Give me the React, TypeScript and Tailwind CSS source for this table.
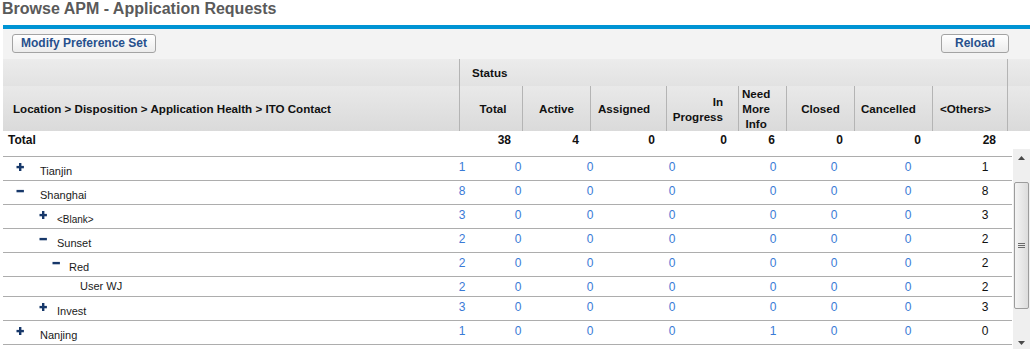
import React from "react";

type Row = {
  label: string;
  level: 0 | 1 | 2 | 3;
  icon?: "plus" | "minus";
  vals: number[];
  small?: boolean;
  short?: boolean;
};

const headerCols = [
  { key: "total", w: "w-[63px]", total: "38" },
  { key: "active", w: "w-[68px]", total: "4" },
  { key: "assigned", w: "w-[76px]", total: "0" },
  { key: "inprogress", w: "w-[72px]", total: "0" },
  { key: "needinfo", w: "w-[48px]", total: "6" },
  { key: "closed", w: "w-[68px]", total: "0" },
  { key: "cancelled", w: "w-[78px]", total: "0" },
  { key: "others", w: "w-[75px]", total: "28" },
];

const rows: Row[] = [
  { label: "Tianjin", level: 0, icon: "plus", vals: [1, 0, 0, 0, 0, 0, 0, 1] },
  { label: "Shanghai", level: 0, icon: "minus", vals: [8, 0, 0, 0, 0, 0, 0, 8] },
  { label: "<Blank>", level: 1, icon: "plus", vals: [3, 0, 0, 0, 0, 0, 0, 3], small: true },
  { label: "Sunset", level: 1, icon: "minus", vals: [2, 0, 0, 0, 0, 0, 0, 2] },
  { label: "Red", level: 2, icon: "minus", vals: [2, 0, 0, 0, 0, 0, 0, 2] },
  { label: "User WJ", level: 3, vals: [2, 0, 0, 0, 0, 0, 0, 2], short: true },
  { label: "Invest", level: 1, icon: "plus", vals: [3, 0, 0, 0, 0, 0, 0, 3] },
  { label: "Nanjing", level: 0, icon: "plus", vals: [1, 0, 0, 0, 1, 0, 0, 0] },
];

// left offset of each value cell (40px wide, centred on the digit)
const valueGaps = ["ml-0", "ml-[16px]", "ml-[32px]", "ml-[42px]", "ml-[61px]", "ml-[21px]", "ml-[34px]", "ml-[37px]"];

const levelStyles = {
  0: { icon: "ml-[13px]", label: "ml-[16px]" },
  1: { icon: "ml-[36px]", label: "ml-[10px]" },
  2: { icon: "ml-[49px]", label: "ml-[9px]" },
  3: { icon: "", label: "ml-[77px]" },
};

function TreeIcon({ kind }: { kind: "plus" | "minus" }) {
  return (
    <svg width="8" height="8" viewBox="0 0 8 8" className="block shrink-0">
      {kind === "plus" && <rect x="3" y="0" width="2.4" height="8" fill="#17386a" />}
      <rect x="0.5" y="2.9" width="7.4" height="2.4" fill="#17386a" />
    </svg>
  );
}

function Scrollbar() {
  return (
    <div className="w-[17px] h-[200px] bg-[#efefef] flex flex-col items-center">
      <div className="h-[18px] flex items-center justify-center">
        <svg width="7" height="4" viewBox="0 0 7 4">
          <path d="M0 4 L3.5 0 L7 4 Z" fill="#4a4a4a" />
        </svg>
      </div>
      <div className="mt-[15px] w-[15px] h-[127px] rounded-[2px] border border-[#9c9c9c] bg-gradient-to-r from-[#f4f4f4] to-[#dcdcdc] flex flex-col items-center justify-center gap-[1px]">
        <div className="w-[7px] h-px bg-[#6a6a6a]" />
        <div className="w-[7px] h-px bg-[#6a6a6a]" />
        <div className="w-[7px] h-px bg-[#6a6a6a]" />
      </div>
      <div className="mt-[32px] h-[4px] flex items-center justify-center">
        <svg width="7" height="4" viewBox="0 0 7 4">
          <path d="M0 0 L7 0 L3.5 4 Z" fill="#4a4a4a" />
        </svg>
      </div>
    </div>
  );
}

export default function App() {
  return (
    <div className="w-[1034px] h-[349px] overflow-hidden bg-white font-['Liberation_Sans',Arial,sans-serif] text-[#111]">
      <h1 className="h-[25px] pl-[2px] text-[16px] leading-[17px] font-bold text-[#5a5a5a]">
        Browse APM - Application Requests
      </h1>

      <div className="ml-[3px] w-[1027px]">
        <div className="h-[4px] bg-[#0094d4]" />

        {/* toolbar */}
        <div className="h-[30px] bg-[#f3f3f3] flex justify-between items-start pt-[5px] pl-[9px] pr-[21px]">
          <button className="h-[19px] px-[8px] rounded-[3px] border border-[#a3a3a3] bg-gradient-to-b from-white to-[#ececec] text-[12px] leading-[17px] font-bold text-[#27508c]">
            Modify Preference Set
          </button>
          <button className="h-[19px] w-[68px] rounded-[3px] border border-[#a3a3a3] bg-gradient-to-b from-white to-[#ececec] text-[12px] leading-[17px] font-bold text-[#27508c]">
            Reload
          </button>
        </div>

        {/* header */}
        <div className="text-[11.6px] font-bold text-[#111]">
          <div className="flex h-[27px] bg-gradient-to-b from-[#ececec] to-[#e2e2e2]">
            <div className="w-[456px]" />
            <div className="w-[548px] border-l border-[#b4b4b4] flex items-center pl-[12px]">Status</div>
            <div className="w-[23px] border-l border-[#b4b4b4]" />
          </div>
          <div className="flex h-[45px] bg-gradient-to-b from-[#e9e9e9] to-[#dadada] leading-[15px]">
            <div className="w-[456px] flex items-center pl-[10px]">
              Location &gt; Disposition &gt; Application Health &gt; ITO Contact
            </div>
            <div className="w-[63px] border-l border-[#b4b4b4] flex items-center justify-center pl-[4px]">Total</div>
            <div className="w-[68px] border-l border-[#b4b4b4] flex items-center justify-center">Active</div>
            <div className="w-[76px] border-l border-[#b4b4b4] flex items-center pl-[7px]">Assigned</div>
            <div className="w-[72px] border-l border-[#b4b4b4] flex items-center justify-end pr-[15px] text-right">
              In
              <br />
              Progress
            </div>
            <div className="w-[48px] border-l border-[#b4b4b4] flex items-center pl-[3px]">
              <div className="text-center">
                Need
                <br />
                More
                <br />
                Info
              </div>
            </div>
            <div className="w-[68px] border-l border-[#b4b4b4] flex items-center justify-center">Closed</div>
            <div className="w-[78px] border-l border-[#b4b4b4] flex items-center pl-[6px]">Cancelled</div>
            <div className="w-[75px] border-l border-[#b4b4b4] flex items-center pl-[7px]">&lt;Others&gt;</div>
            <div className="w-[23px] border-l border-[#b4b4b4]" />
          </div>

          {/* totals */}
          <div className="flex h-[18px] items-center bg-white text-[12px]">
            <div className="w-[456px] pl-[5px]">Total</div>
            {headerCols.map((c) => (
              <div key={c.key} className={`${c.w} text-right pr-[11px]`}>
                {c.total}
              </div>
            ))}
          </div>
        </div>

        {/* body */}
        <div className="flex">
          <div className="w-[1009px] pt-[7px]">
            {rows.map((r, i) => {
              const ls = levelStyles[r.level];
              return (
                <div
                  key={r.label}
                  className={`flex items-start border-t border-[#adadad] ${r.short ? "h-[20px]" : "h-[24px]"} ${
                    i === rows.length - 1 ? "border-b h-[25px]" : ""
                  }`}
                >
                  <div className="w-[439px] flex items-start">
                    {r.icon && (
                      <div className={`${ls.icon} pt-[6px]`}>
                        <TreeIcon kind={r.icon} />
                      </div>
                    )}
                    <div
                      className={`${ls.label} ${r.short ? "pt-[3px]" : "pt-[8px]"} ${
                        r.small ? "text-[10px] leading-[13px]" : "text-[11px] leading-[13px]"
                      } text-[#1a1a1a]`}
                    >
                      {r.label}
                    </div>
                  </div>
                  {r.vals.map((v, j) => (
                    <div
                      key={j}
                      className={`${valueGaps[j]} w-[40px] text-center text-[12px] leading-[14px] pt-[3px] ${
                        j === 7 ? "text-[#111]" : "text-[#3a7ad6]"
                      }`}
                    >
                      {v}
                    </div>
                  ))}
                </div>
              );
            })}
          </div>
          <div className="ml-px">
            <Scrollbar />
          </div>
        </div>
      </div>
    </div>
  );
}
